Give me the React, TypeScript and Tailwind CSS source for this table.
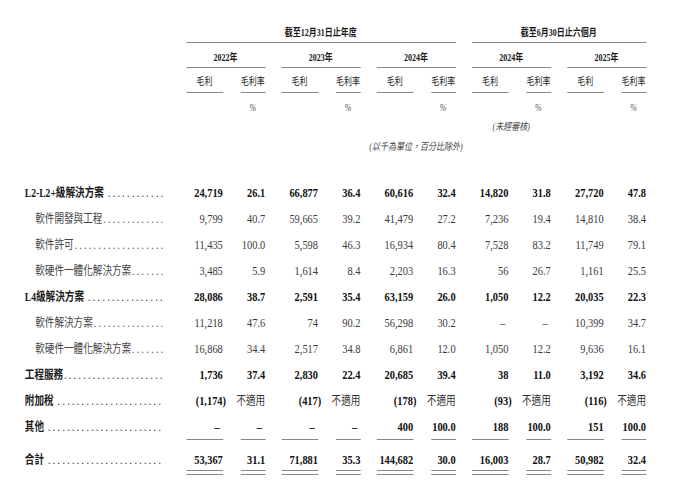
import type { ReactNode } from 'react'

type Row = {
  label: string
  sub?: boolean
  space?: boolean
  dots: number
  values: string[]
}

const rows: Row[] = [
  { label: 'L2-L2+級解決方案', space: true, dots: 12, values: ['24,719', '26.1', '66,877', '36.4', '60,616', '32.4', '14,820', '31.8', '27,720', '47.8'] },
  { label: '軟件開發與工程', sub: true, dots: 13, values: ['9,799', '40.7', '59,665', '39.2', '41,479', '27.2', '7,236', '19.4', '14,810', '38.4'] },
  { label: '軟件許可', sub: true, dots: 19, values: ['11,435', '100.0', '5,598', '46.3', '16,934', '80.4', '7,528', '83.2', '11,749', '79.1'] },
  { label: '軟硬件一體化解決方案', sub: true, dots: 7, values: ['3,485', '5.9', '1,614', '8.4', '2,203', '16.3', '56', '26.7', '1,161', '25.5'] },
  { label: 'L4級解決方案', space: true, dots: 16, values: ['28,086', '38.7', '2,591', '35.4', '63,159', '26.0', '1,050', '12.2', '20,035', '22.3'] },
  { label: '軟件解決方案', sub: true, dots: 15, values: ['11,218', '47.6', '74', '90.2', '56,298', '30.2', '–', '–', '10,399', '34.7'] },
  { label: '軟硬件一體化解決方案', sub: true, dots: 7, values: ['16,868', '34.4', '2,517', '34.8', '6,861', '12.0', '1,050', '12.2', '9,636', '16.1'] },
  { label: '工程服務', dots: 21, values: ['1,736', '37.4', '2,830', '22.4', '20,685', '39.4', '38', '11.0', '3,192', '34.6'] },
  { label: '附加稅', space: true, dots: 22, values: ['(1,174)', '不適用', '(417)', '不適用', '(178)', '不適用', '(93)', '不適用', '(116)', '不適用'] },
]

const others = ['–', '–', '–', '–', '400', '100.0', '188', '100.0', '151', '100.0']
const total = ['53,367', '31.1', '71,881', '35.3', '144,682', '30.0', '16,003', '28.7', '50,982', '32.4']

function Cols({ render }: { render: (i: number, rate: boolean) => ReactNode }) {
  return (
    <div className="flex gap-[20px]">
      {[0, 1, 2, 3, 4].map((g) => (
        <div key={g} className="flex w-[99px] justify-between">
          <div className="w-[46px] flex">{render(g * 2, false)}</div>
          <div className="w-[31px] flex">{render(g * 2 + 1, true)}</div>
        </div>
      ))}
    </div>
  )
}

function Value({ v }: { v: string }) {
  if (v === '不適用') {
    return <span className="text-[12px] font-normal text-[#333] whitespace-nowrap">{v}</span>
  }
  if (v === '–') return <span className="pr-[4px]">–</span>
  if (v.startsWith('(')) return <span className="-mr-[4px]">{v}</span>
  return <span>{v}</span>
}

function Label({ label, sub, space, dots, bold }: { label: string; sub?: boolean; space?: boolean; dots: number; bold: boolean }) {
  return (
    <div
      className={`w-[212.5px] pr-[3.5px] mr-[20px] shrink-0 flex items-center text-[12px] ${
        sub ? 'pl-[44px] text-[#444]' : 'pl-[31px] text-[#1a1a1a]'
      } ${bold ? 'font-bold' : ''}`}
    >
      <span className="whitespace-nowrap">{label}</span>
      <span className={`whitespace-nowrap tracking-[3px] font-normal ${space ? 'ml-[5px]' : 'ml-[1px]'}`}>
        {'.'.repeat(dots)}
      </span>
    </div>
  )
}

export default function App() {
  return (
    <div className="w-[692px] h-[491px] overflow-hidden bg-white">
      <div className="w-[865px] origin-left scale-x-[0.8] pt-[22px] font-['Liberation_Serif','Noto_Sans_CJK_TC',serif] text-[#1a1a1a]">
        {/* period headings */}
        <div className="flex gap-[20px] text-[10px] font-bold">
          <div className="w-[212.5px]" />
          <div className="w-[337px] h-[21px] flex items-center justify-center border-b border-[#888]">
            截至12月31日止年度
          </div>
          <div className="w-[218px] h-[21px] flex items-center justify-center border-b border-[#888]">
            截至6月30日止六個月
          </div>
        </div>

        {/* years */}
        <div className="flex mt-[4px] text-[10px] font-bold">
          <div className="w-[232.5px] shrink-0" />
          <div className="flex gap-[20px]">
            {['2022年', '2023年', '2024年', '2024年', '2025年'].map((y, i) => (
              <div key={i} className="w-[99px] h-[21px] flex items-center justify-center border-b border-[#888]">
                {y}
              </div>
            ))}
          </div>
        </div>

        {/* column heads */}
        <div className="flex mt-[3px] text-[10px] text-[#222]">
          <div className="w-[232.5px] shrink-0" />
          <Cols
            render={(_, rate) => (
              <div className="w-full h-[22px] flex items-center justify-center border-b border-[#888]">
                {rate ? '毛利率' : '毛利'}
              </div>
            )}
          />
        </div>

        {/* percent marks */}
        <div className="flex mt-[5px] h-[18px] text-[10px] italic text-[#555]">
          <div className="w-[232.5px] shrink-0" />
          <Cols
            render={(_, rate) => <div className="w-full flex items-center justify-center">{rate ? '%' : ''}</div>}
          />
        </div>

        <div className="flex h-[20px] text-[10px] italic text-[#444]">
          <div className="w-[232.5px] shrink-0" />
          <div className="w-[357px] shrink-0" />
          <div className="w-[99px] flex items-center justify-center">(未經審核)</div>
        </div>

        <div className="flex h-[20px] text-[10px] italic text-[#444]">
          <div className="w-[232.5px] shrink-0" />
          <div className="w-[575px] flex items-center justify-center">(以千為單位，百分比除外)</div>
        </div>

        {/* data rows */}
        <div className="mt-[24px] text-[13px]">
          {rows.map((r, idx) => {
            const bold = !r.sub
            return (
              <div key={idx} className="flex h-[26px]">
                <Label label={r.label} sub={r.sub} space={r.space} dots={r.dots} bold={bold} />
                <Cols
                  render={(i) => (
                    <div
                      className={`w-full flex items-center justify-end ${
                        bold ? 'font-bold text-[#111]' : 'text-[#3a3a3a]'
                      }`}
                    >
                      <Value v={r.values[i]} />
                    </div>
                  )}
                />
              </div>
            )
          })}

          <div className="flex h-[26px]">
            <Label label="其他" space dots={24} bold />
            <Cols
              render={(i) => (
                <div className="w-full flex items-center justify-end border-b border-[#888] font-bold text-[#111]">
                  <Value v={others[i]} />
                </div>
              )}
            />
          </div>

          <div className="flex mt-px">
            <div className="flex h-[30px] pt-[8px] items-center">
              <Label label="合計" space dots={24} bold />
            </div>
            <Cols
              render={(i) => (
                <div className="w-full border-b border-[#888] pb-[3px]">
                  <div className="h-[30px] pt-[8px] leading-[22px] flex justify-end border-b border-[#888] font-bold text-[#111]">
                    {total[i]}
                  </div>
                </div>
              )}
            />
          </div>
        </div>
      </div>
    </div>
  )
}
